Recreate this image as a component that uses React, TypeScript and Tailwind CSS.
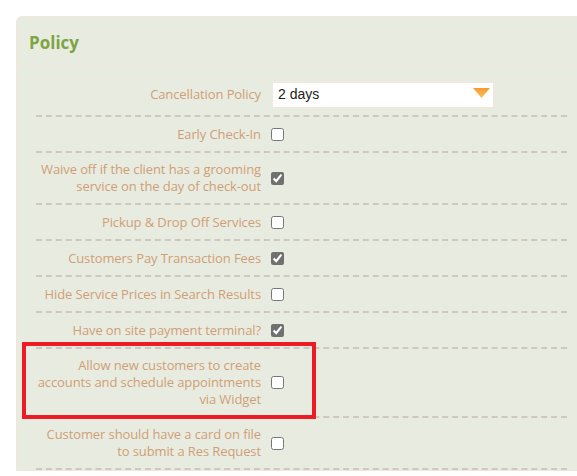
import { useState } from "react";

interface policyRow {
  lines: string[];
  checked: boolean;
  highlight?: boolean;
}

const rows: policyRow[] = [
  { lines: ["Early Check-In"], checked: false },
  { lines: ["Waive off if the client has a grooming", "service on the day of check-out"], checked: true },
  { lines: ["Pickup & Drop Off Services"], checked: false },
  { lines: ["Customers Pay Transaction Fees"], checked: true },
  { lines: ["Hide Service Prices in Search Results"], checked: false },
  { lines: ["Have on site payment terminal?"], checked: true },
  {
    lines: ["Allow new customers to create", "accounts and schedule appointments", "via Widget"],
    checked: false,
    highlight: true,
  },
  { lines: ["Customer should have a card on file", "to submit a Res Request"], checked: false },
];

const labelClass =
  "w-[225px] shrink-0 text-right text-[13px] leading-[17px] tracking-[-0.1px] text-[#d09e76]";

export default function App() {
  const [cancel, setCancel] = useState("2 days");

  return (
    <div className="w-[577px] h-[476px] overflow-hidden bg-white font-['Open_Sans',sans-serif]">
      <div className="ml-4 mt-4 w-[571px] rounded-tl-[6px] border border-[#f3e5da] bg-[#e8ece0]">
        <div className="h-[48px] flex items-center px-[12px] pt-[4px] border-b border-[#f3e5da]">
          <h2 className="text-[17px] font-bold text-[#7ea443]">Policy</h2>
        </div>

        <div className="px-[19px] pt-[8px]">
          <div className="flex items-center py-2 border-b-2 border-dashed border-[#cfc8c0]">
            <label className={labelClass}>Cancellation Policy</label>
            <div className="relative ml-[11px] w-[222px] h-[26px]">
              <select
                value={cancel}
                onChange={(e) => setCancel(e.target.value)}
                className="appearance-none w-full h-full bg-white border border-[#f3e6da] pl-[5px] text-[14px] text-[#222] font-['Liberation_Sans',Arial,sans-serif] outline-none"
              >
                <option>1 day</option>
                <option>2 days</option>
                <option>3 days</option>
              </select>
              <svg
                className="pointer-events-none absolute right-[4px] top-[7px]"
                width="17"
                height="10"
                viewBox="0 0 17 10"
              >
                <defs>
                  <linearGradient id="arrowGrad" x1="0" y1="0" x2="0" y2="1">
                    <stop offset="0" stopColor="#f59a32" />
                    <stop offset="1" stopColor="#fbc15c" />
                  </linearGradient>
                </defs>
                <polygon points="0,0 17,0 8.5,10" fill="url(#arrowGrad)" />
              </svg>
            </div>
          </div>

          {rows.map((row, idx) => (
            <div
              key={idx}
              className="relative flex items-center py-2 border-b-2 border-dashed border-[#cfc8c0]"
            >
              <label className={labelClass}>
                {row.lines.map((line, i) => (
                  <span key={i} className="block whitespace-nowrap">
                    {line}
                  </span>
                ))}
              </label>
              <div className="ml-[10px] h-[18px] flex items-center">
                <input
                  type="checkbox"
                  defaultChecked={row.checked}
                  className="m-0 w-[13px] h-[13px] accent-[#707070]"
                />
              </div>
              {row.highlight && (
                <div className="pointer-events-none absolute left-[-14px] top-[-7px] w-[294px] h-[77px] border-4 border-[#ed1c24]" />
              )}
            </div>
          ))}
        </div>
      </div>
    </div>
  );
}
